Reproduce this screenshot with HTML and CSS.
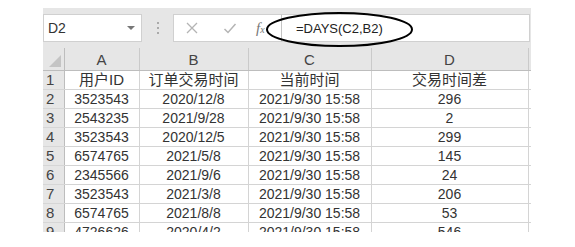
FILE: index.html
```html
<!DOCTYPE html>
<html lang="zh">
<head>
    <meta charset="UTF-8">
    <title>交易时间差</title>
    <link rel="stylesheet" href="styles.css">
</head>
<body>
<div class="sheet">
    <div class="bar">
        <div class="namebox"><span>D2</span><span class="drop"></span></div>
        <div class="dots"><i></i><i></i><i></i></div>
        <div class="fxbox">
            <svg class="ico" width="14" height="14" viewBox="0 0 14 14"><path d="M2 2 L12 12 M12 2 L2 12" stroke="#b4b4b4" stroke-width="1.3" fill="none"/></svg>
            <svg class="ico ok" width="14" height="14" viewBox="0 0 14 14"><path d="M1.5 8 L5 11.5 L12.5 3" stroke="#b4b4b4" stroke-width="1.5" fill="none"/></svg>
            <span class="fx">f<small>x</small></span>
        </div>
        <div class="formula">=DAYS(C2,B2)</div>
    </div>

    <table class="grid">
        <colgroup>
            <col class="c0"><col class="ca"><col class="cb"><col class="cc"><col class="cd"><col>
        </colgroup>
        <tr class="head">
            <th class="corner"><span class="tri"></span></th>
            <th>A</th><th>B</th><th>C</th><th>D</th><th class="rest"></th>
        </tr>
        <tr><th>1</th><td class="zh">用户ID</td><td class="zh">订单交易时间</td><td class="zh">当前时间</td><td class="zh">交易时间差</td><td></td></tr>
        <tr><th>2</th><td>3523543</td><td>2020/12/8</td><td>2021/9/30 15:58</td><td>296</td><td></td></tr>
        <tr><th>3</th><td>2543235</td><td>2021/9/28</td><td>2021/9/30 15:58</td><td>2</td><td></td></tr>
        <tr><th>4</th><td>3523543</td><td>2020/12/5</td><td>2021/9/30 15:58</td><td>299</td><td></td></tr>
        <tr><th>5</th><td>6574765</td><td>2021/5/8</td><td>2021/9/30 15:58</td><td>145</td><td></td></tr>
        <tr><th>6</th><td>2345566</td><td>2021/9/6</td><td>2021/9/30 15:58</td><td>24</td><td></td></tr>
        <tr><th>7</th><td>3523543</td><td>2021/3/8</td><td>2021/9/30 15:58</td><td>206</td><td></td></tr>
        <tr><th>8</th><td>6574765</td><td>2021/8/8</td><td>2021/9/30 15:58</td><td>53</td><td></td></tr>
        <tr><th>9</th><td>4726626</td><td>2020/4/2</td><td>2021/9/30 15:58</td><td>546</td><td></td></tr>
    </table>

    <!-- 手画的圈 -->
    <svg class="circle" width="149" height="37" viewBox="0 0 149 37">
        <ellipse cx="74.5" cy="18.5" rx="72.5" ry="16.5" fill="none" stroke="#000" stroke-width="2"/>
    </svg>
</div>
</body>
</html>
```

FILE: styles.css
```css
* {
    margin: 0;
    padding: 0;
    box-sizing: border-box;
}
body{
    background: #fff;
    font-family: "Liberation Sans", "Noto Sans CJK SC", sans-serif;
    color: #333;
}
.sheet{
    position: relative;
    width: 488px;
    height: 224px;
    margin: 8px 0 0 43px;
    background: #e6e6e6;
    overflow: hidden;
}

/* 编辑栏 */
.bar{
    display: flex;
    height: 28px;
    margin-top: 6px;
}
.namebox{
    width: 99px;
    background: #fff;
    border: 1px solid #d0d0d0;
    display: flex;
    align-items: center;
    justify-content: space-between;
    padding: 0 6px 0 4px;
    font-size: 14px;
    color: #333;
}
.drop{
    width: 0;
    height: 0;
    border-left: 4px solid transparent;
    border-right: 4px solid transparent;
    border-top: 4px solid #777;
}
.dots{
    width: 31px;
    display: flex;
    flex-direction: column;
    align-items: center;
    justify-content: center;
    gap: 3px;
}
.dots i{
    width: 2px;
    height: 2px;
    background: #aaa;
}
.fxbox{
    width: 109px;
    background: #fff;
    border: 1px solid #d0d0d0;
    border-right: 1px solid #c4c4c4;
    display: flex;
    align-items: center;
    padding-left: 11px;
}
.fxbox .ico{
    margin-right: 24px;
}
.fxbox .ico.ok{
    margin-right: 19px;
}
.fx{
    font-family: "Liberation Serif", serif;
    font-style: italic;
    font-size: 15px;
    color: #777;
}
.fx small{
    font-size: 10px;
}
.formula{
    width: 248px;
    background: #fff;
    border: 1px solid #d0d0d0;
    border-left: none;
    padding-left: 14px;
    display: flex;
    align-items: center;
    font-size: 13px;
    color: #222;
}

/* 表格 */
.grid{
    margin-top: 6px;
    border-collapse: collapse;
    table-layout: fixed;
    width: 488px;
    font-size: 14px;
}
.c0{ width: 21px; }
.ca{ width: 75px; }
.cb{ width: 109px; }
.cc{ width: 123px; }
.cd{ width: 157px; }
.grid tr{
    height: 19px;
}
.grid tr.head{
    height: 22px;
}
.grid th{
    background: #e6e6e6;
    font-weight: normal;
    color: #444;
    text-align: left;
    padding-left: 3px;
    font-size: 15px;
    line-height: 18px;
    border-bottom: 1px solid #d6d6d6;
    border-right: 1px solid #bdbdbd;
}
.grid .head th{
    text-align: center;
    padding: 3px 0 0;
    border-right: 1px solid #cacaca;
    border-bottom: 1px solid #bdbdbd;
}
.grid .head th.rest{
    border-right: none;
}
.grid .head th.corner{
    position: relative;
    border-right: 1px solid #bdbdbd;
}
.tri{
    position: absolute;
    right: 3px;
    bottom: 3px;
    width: 0;
    height: 0;
    border-left: 12px solid transparent;
    border-bottom: 12px solid #c4c4c4;
}
.grid td{
    background: #fff;
    text-align: center;
    line-height: 18px;
    border-right: 1px solid #d4d4d4;
    border-bottom: 1px solid #d4d4d4;
    white-space: nowrap;
    overflow: hidden;
}
.grid td:last-child{
    border-right: none;
}
.grid td.zh{
    font-size: 15px;
}

.circle{
    position: absolute;
    left: 222px;
    top: 3px;
}
```
